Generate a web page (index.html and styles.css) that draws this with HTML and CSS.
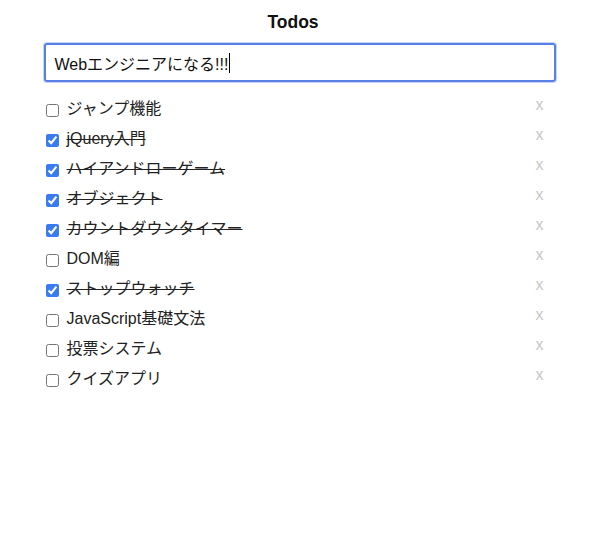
FILE: index.html
```html
<!DOCTYPE html>
<html lang="ja">
<head>
<meta charset="utf-8">
<title>Todos</title>
<link rel="stylesheet" href="styles.css">
</head>
<body>
<div class="app">
  <h1 class="title">Todos</h1>
  <div class="new-todo"><span class="new-todo-text">Webエンジニアになる!!!</span><span class="caret"></span></div>
  <ul class="todo-list">
    <li class="todo"><input type="checkbox" class="toggle"><span class="label">ジャンプ機能</span><span class="destroy">x</span></li>
    <li class="todo done"><input type="checkbox" class="toggle" checked><span class="label">jQuery入門</span><span class="destroy">x</span></li>
    <li class="todo done"><input type="checkbox" class="toggle" checked><span class="label">ハイアンドローゲーム</span><span class="destroy">x</span></li>
    <li class="todo done"><input type="checkbox" class="toggle" checked><span class="label">オブジェクト</span><span class="destroy">x</span></li>
    <li class="todo done"><input type="checkbox" class="toggle" checked><span class="label">カウントダウンタイマー</span><span class="destroy">x</span></li>
    <li class="todo"><input type="checkbox" class="toggle"><span class="label">DOM編</span><span class="destroy">x</span></li>
    <li class="todo done"><input type="checkbox" class="toggle" checked><span class="label">ストップウォッチ</span><span class="destroy">x</span></li>
    <li class="todo"><input type="checkbox" class="toggle"><span class="label">JavaScript基礎文法</span><span class="destroy">x</span></li>
    <li class="todo"><input type="checkbox" class="toggle"><span class="label">投票システム</span><span class="destroy">x</span></li>
    <li class="todo"><input type="checkbox" class="toggle"><span class="label">クイズアプリ</span><span class="destroy">x</span></li>
  </ul>
</div>
</body>
</html>
```

FILE: styles.css
```css
html, body {
  margin: 0;
  padding: 0;
  background: #fff;
}
body {
  font-family: "Liberation Sans", Arial, "Noto Sans CJK JP", sans-serif;
  color: #222;
  font-size: 16px;
}
.app {
  width: 512px;
  margin: 0 auto;
  padding-top: 11px;
}
.title {
  margin: 0 0 10px;
  padding-right: 13px;
  text-align: center;
  font-size: 17.5px;
  font-weight: bold;
  line-height: 22px;
  color: #111;
}
.new-todo {
  box-sizing: border-box;
  height: 39px;
  border: 2px solid #5a7fe6;
  border-radius: 3px;
  box-shadow: 0 0 0 1px rgba(90, 127, 230, 0.35);
  padding: 0 9px;
  display: flex;
  align-items: center;
  font-size: 16px;
  color: #111;
}
.caret {
  display: inline-block;
  width: 1px;
  height: 20px;
  background: #000;
  margin-left: 1px;
}
.todo-list {
  list-style: none;
  margin: 10px 0 0;
  padding: 0;
}
.todo {
  height: 30px;
  display: flex;
  align-items: center;
}
.toggle {
  width: 13px;
  height: 13px;
  margin: 6px 0 0 2px;
  accent-color: #3a7bf0;
}
.label {
  margin-left: 8px;
  color: #222;
}
.done .label {
  text-decoration: line-through;
}
.destroy {
  margin-left: auto;
  margin-right: 12px;
  color: #c8c8c8;
  font-size: 16px;
  padding-bottom: 5px;
}
```
